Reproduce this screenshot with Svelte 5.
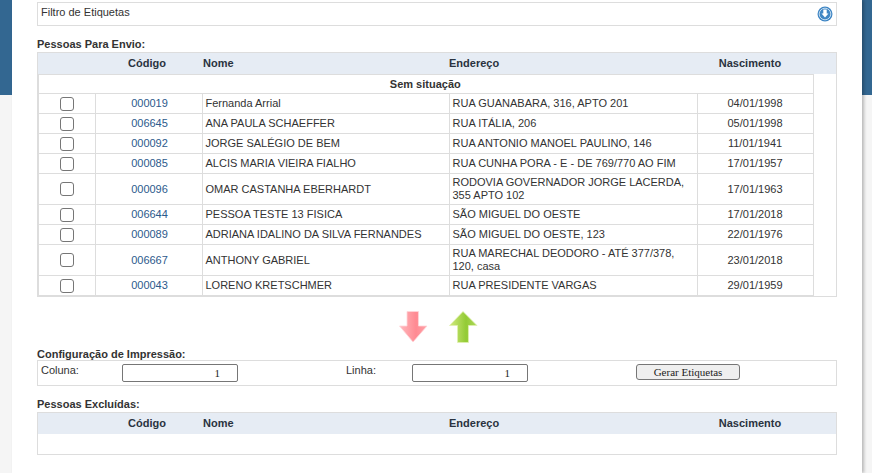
<script>
    const pessoas = [
        { codigo: "000019", nome: "Fernanda Arrial", endereco: "RUA GUANABARA, 316, APTO 201", nascimento: "04/01/1998" },
        { codigo: "006645", nome: "ANA PAULA SCHAEFFER", endereco: "RUA ITÁLIA, 206", nascimento: "05/01/1998" },
        { codigo: "000092", nome: "JORGE SALÉGIO DE BEM", endereco: "RUA ANTONIO MANOEL PAULINO, 146", nascimento: "11/01/1941" },
        { codigo: "000085", nome: "ALCIS MARIA VIEIRA FIALHO", endereco: "RUA CUNHA PORA - E - DE 769/770 AO FIM", nascimento: "17/01/1957" },
        { codigo: "000096", nome: "OMAR CASTANHA EBERHARDT", endereco: "RODOVIA GOVERNADOR JORGE LACERDA, 355 APTO 102", nascimento: "17/01/1963" },
        { codigo: "006644", nome: "PESSOA TESTE 13 FISICA", endereco: "SÃO MIGUEL DO OESTE", nascimento: "17/01/2018" },
        { codigo: "000089", nome: "ADRIANA IDALINO DA SILVA FERNANDES", endereco: "SÃO MIGUEL DO OESTE, 123", nascimento: "22/01/1976" },
        { codigo: "006667", nome: "ANTHONY GABRIEL", endereco: "RUA MARECHAL DEODORO - ATÉ 377/378, 120, casa", nascimento: "23/01/2018" },
        { codigo: "000043", nome: "LORENO KRETSCHMER", endereco: "RUA PRESIDENTE VARGAS", nascimento: "29/01/1959" }
    ];
</script>

<div class="page">
    <div class="band left"></div>
    <div class="band right"></div>
    <main class="panel">
        <div class="filtro">
            <span>Filtro de Etiquetas</span>
            <svg class="expand" viewBox="0 0 16 16" width="16" height="16">
                <circle cx="8" cy="8" r="7.5" fill="#3f86c4" />
                <circle cx="8" cy="8" r="5.8" fill="none" stroke="#cfe3f3" stroke-width="0.9" />
                <path d="M6.3 3.600h3.400v3.800h1.800L8 11.600 4.500 7.400h1.800z" fill="#fff" />
            </svg>
        </div>

        <h2 class="titulo envio">Pessoas Para Envio:</h2>
        <div class="grade">
            <div class="cabecalho">
                <span></span>
                <span class="centro">Código</span>
                <span>Nome</span>
                <span>Endereço</span>
                <span class="centro">Nascimento</span>
            </div>
            <div class="corpo">
                <table>
                    <colgroup>
                        <col class="c-check" />
                        <col class="c-codigo" />
                        <col class="c-nome" />
                        <col class="c-endereco" />
                        <col class="c-nasc" />
                    </colgroup>
                    <tbody>
                        <tr class="grupo"><td colspan="5">Sem situação</td></tr>
                        {#each pessoas as p}
                            <tr>
                                <td class="centro"><span class="check"></span></td>
                                <td class="centro codigo">{p.codigo}</td>
                                <td>{p.nome}</td>
                                <td>{p.endereco}</td>
                                <td class="centro">{p.nascimento}</td>
                            </tr>
                        {/each}
                    </tbody>
                </table>
            </div>
        </div>

        <div class="setas">
            <svg width="30" height="34" viewBox="0 0 30 34">
                <defs>
                    <linearGradient id="verm" x1="0" x2="1" y1="0" y2="0">
                        <stop offset="0" stop-color="#ffb9be" />
                        <stop offset="0.6" stop-color="#ff8a92" />
                        <stop offset="1" stop-color="#ffa3a9" />
                    </linearGradient>
                    <linearGradient id="verde" x1="0" x2="1" y1="0" y2="0">
                        <stop offset="0" stop-color="#d2ea80" />
                        <stop offset="0.6" stop-color="#93cb35" />
                        <stop offset="1" stop-color="#aed85c" />
                    </linearGradient>
                </defs>
                <path d="M9 1.500h11.500V16H29L15 32 1.500 16H9z" fill="url(#verm)" stroke="#ffd6d9" stroke-width="0.8" />
            </svg>
            <svg width="30" height="34" viewBox="0 0 30 34">
                <path d="M15 1.500L29 15.500h-8.500v17H9.500v-17h-8z" fill="url(#verde)" stroke="#dff0b0" stroke-width="0.8" />
            </svg>
        </div>

        <h2 class="titulo config">Configuração de Impressão:</h2>
        <div class="impressao">
            <label class="rotulo coluna" for="coluna">Coluna:</label>
            <input id="coluna" class="numero" value="1" />
            <label class="rotulo linha" for="linha">Linha:</label>
            <input id="linha" class="numero" value="1" />
            <button class="gerar">Gerar Etiquetas</button>
        </div>

        <h2 class="titulo excluidas">Pessoas Excluídas:</h2>
        <div class="grade vazia">
            <div class="cabecalho">
                <span></span>
                <span class="centro">Código</span>
                <span>Nome</span>
                <span>Endereço</span>
                <span class="centro">Nascimento</span>
            </div>
        </div>
    </main>
</div>

<style>
    :global(body) {
        margin: 0;
        background: #f5f5f5;
    }
    .page {
        position: relative;
        width: 872px;
        height: 473px;
        overflow: hidden;
        font-family: "Liberation Sans", Arial, sans-serif;
        font-size: 11px;
        color: #333;
    }
    .band {
        position: absolute;
        top: 0;
        height: 95px;
        background: #336791;
    }
    .band.left {
        left: 0;
        width: 12px;
    }
    .band.right {
        right: 0;
        width: 10px;
    }
    .panel {
        position: relative;
        box-sizing: border-box;
        width: 850px;
        height: 473px;
        margin-left: 12px;
        padding: 2px 25px 0 25px;
        background: #fff;
        box-shadow: 2px 0 3px rgba(0, 0, 0, 0.25);
    }
    .filtro {
        box-sizing: border-box;
        display: flex;
        justify-content: space-between;
        width: 800px;
        height: 24px;
        padding: 3px 3px 0 3px;
        border: 1px solid #ddd;
        line-height: 13px;
    }
    .titulo {
        margin: 0;
        font-size: 11px;
        line-height: 13px;
        font-weight: bold;
        color: #333;
    }
    .envio {
        margin-top: 12px;
        margin-bottom: 1px;
    }
    .config {
        line-height: 12px;
    }
    .excluidas {
        margin-top: 12px;
        margin-bottom: 1px;
    }
    .grade {
        box-sizing: border-box;
        width: 800px;
        border: 1px solid #ddd;
    }
    .cabecalho {
        box-sizing: border-box;
        display: grid;
        grid-template-columns: 58px 106px 247px 248px 106px;
        align-items: center;
        height: 21px;
        padding-bottom: 1px;
        background: #e6ecf4;
        font-weight: bold;
        color: #2a3340;
    }
    .cabecalho span:nth-child(2) {
        padding-right: 4px;
    }
    .cabecalho span:nth-child(3) {
        padding-left: 1px;
    }
    .corpo {
        border-left: 1px solid #ddd;
    }
    table {
        width: 774px;
        table-layout: fixed;
        border-collapse: collapse;
    }
    .c-check {
        width: 56px;
    }
    .c-codigo {
        width: 107px;
    }
    .c-nome {
        width: 247px;
    }
    .c-endereco {
        width: 248px;
    }
    .c-nasc {
        width: 116px;
    }
    td {
        box-sizing: border-box;
        height: 20px;
        padding: 2px 3px;
        border: 1px solid #ddd;
        line-height: 13px;
        vertical-align: middle;
    }
    td:first-child {
        border-left: none;
    }
    .grupo td {
        height: 19px;
        padding: 1px 4px 1px 3px;
        text-align: center;
        font-weight: bold;
    }
    .centro {
        text-align: center;
    }
    .codigo {
        padding-left: 5px;
        padding-right: 3px;
        color: #2c5a8c;
    }
    .check {
        display: block;
        box-sizing: border-box;
        width: 14px;
        height: 14px;
        margin: 0 auto;
        background: #fff;
        border: 1px solid #767676;
        border-radius: 3px;
    }
    .setas {
        display: flex;
        justify-content: center;
        gap: 20px;
        height: 38px;
        padding-top: 13px;
        padding-left: 2px;
    }
    .impressao {
        box-sizing: border-box;
        display: flex;
        align-items: flex-start;
        width: 800px;
        height: 26px;
        border: 1px solid #ddd;
    }
    .rotulo {
        padding-top: 3px;
        line-height: 13px;
    }
    .coluna {
        box-sizing: border-box;
        width: 84px;
        padding-left: 3px;
    }
    .linha {
        width: 66px;
        margin-left: 108px;
    }
    .numero {
        box-sizing: border-box;
        width: 116px;
        height: 18px;
        margin-top: 3px;
        padding: 0 17px 0 2px;
        border: 1px solid #767676;
        border-radius: 2px;
        background: #fff;
        font-family: "Liberation Serif", serif;
        font-size: 11px;
        color: #222;
        text-align: right;
        outline: none;
    }
    .gerar {
        box-sizing: border-box;
        width: 104px;
        height: 16px;
        margin: 3px 0 0 108px;
        padding: 0;
        border: 1px solid #767676;
        border-radius: 3px;
        background: #efefef;
        font-family: "Liberation Serif", serif;
        font-size: 11px;
        line-height: 14px;
        color: #222;
    }
    .vazia {
        height: 43px;
    }
</style>
